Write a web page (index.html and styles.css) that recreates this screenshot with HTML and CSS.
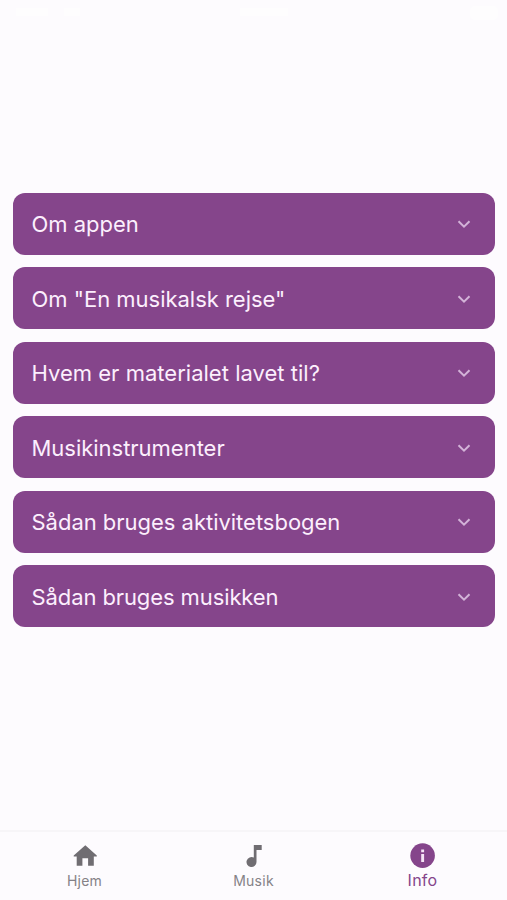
FILE: index.html
```html
<!DOCTYPE html>
<html lang="da">
<head>
<meta charset="utf-8">
<title>Info</title>
<link rel="stylesheet" href="styles.css">
</head>
<body>
<header class="status"><i class="signal"></i><i class="wifi"></i><i class="clock"></i><i class="battery"></i></header>
<main class="list">
<div class="item"><span>Om appen</span><svg class="chev" viewBox="0 0 24 24"><path d="M6.5 9.2 12 14.7l5.5-5.5"/></svg></div>
<div class="item"><span>Om "En musikalsk rejse"</span><svg class="chev" viewBox="0 0 24 24"><path d="M6.5 9.2 12 14.7l5.5-5.5"/></svg></div>
<div class="item"><span class="wide">Hvem er materialet lavet til?</span><svg class="chev" viewBox="0 0 24 24"><path d="M6.5 9.2 12 14.7l5.5-5.5"/></svg></div>
<div class="item"><span>Musikinstrumenter</span><svg class="chev" viewBox="0 0 24 24"><path d="M6.5 9.2 12 14.7l5.5-5.5"/></svg></div>
<div class="item"><span>Sådan bruges aktivitetsbogen</span><svg class="chev" viewBox="0 0 24 24"><path d="M6.5 9.2 12 14.7l5.5-5.5"/></svg></div>
<div class="item"><span class="tight">Sådan bruges musikken</span><svg class="chev" viewBox="0 0 24 24"><path d="M6.5 9.2 12 14.7l5.5-5.5"/></svg></div>
</main>
<nav class="tabs">
<a class="tab"><svg viewBox="0 0 30 30"><path d="M15.300 4.2 3.7 14.4v1h3v9.400h5.700v-7.500h5.700v7.500h5.700v-9.400h3v-1z"/></svg><span>Hjem</span></a>
<a class="tab"><svg viewBox="0 0 30 30"><path d="M14.8 4v12.600a5 5 0 1 0 2.700 4.400V9h5.200V4z"/></svg><span>Musik</span></a>
<a class="tab active"><svg viewBox="0 0 30 30"><circle cx="14.600" cy="14.600" r="12.300"/><path class="mark" d="M13.200 8.500h2.900v2.700h-2.900zM13.200 13h2.900v8h-2.900z"/></svg><span>Info</span></a>
</nav>
</body>
</html>
```
FILE: styles.css
```css
* { box-sizing: border-box; }
body {
  margin: 0;
  height: 900px;
  display: flex;
  flex-direction: column;
  background: #fdfbfe;
  font-family: Inter, sans-serif;
}
.status {
  height: 30px;
  padding: 6px 9px 0 16px;
  display: flex;
  align-items: flex-start;
}
.status i { height: 8px; margin-top: 2px; background: #fefdfe; }
.status .signal { width: 32px; }
.status .wifi { width: 16px; margin-left: 16px; }
.status .clock { width: 48px; margin-left: 160px; }
.status .battery { width: 28px; height: 14px; margin: 0 0 0 auto; border-radius: 5px; }
.list {
  flex: 1;
  padding: 162.8px 12.5px 0 13px;
  display: flex;
  flex-direction: column;
  gap: 12.4px;
}
.item {
  height: 62.1px;
  border-radius: 12px;
  background: #85458b;
  color: #fceffd;
  font-size: 22px;
  letter-spacing: -0.02px;
  display: flex;
  align-items: center;
  justify-content: space-between;
  padding: 0 18.5px;
  white-space: nowrap;
}
.item:nth-child(even) { padding-top: 1px; }
.tight { letter-spacing: -0.1px; }
.wide { letter-spacing: 0.02px; }
.chev { width: 24px; height: 24px; fill: none; stroke: #d3b3d8; stroke-width: 2; }
.tabs {
  height: 70px;
  border-top: 2px solid #f7f5f8;
  display: flex;
}
.tab {
  flex: 1;
  display: flex;
  flex-direction: column;
  align-items: center;
  padding-top: 9px;
  color: #858287;
  font-size: 14px;
  letter-spacing: 0.25px;
  line-height: 20px;
}
.tab svg { width: 30px; height: 30px; fill: #706d72; }
.tab.active { color: #85458b; font-size: 16px; }
.tab.active svg { fill: #85458b; }
.tab.active span { margin-top: -1px; }
.tab .mark { fill: #f5e5f6; }
```
